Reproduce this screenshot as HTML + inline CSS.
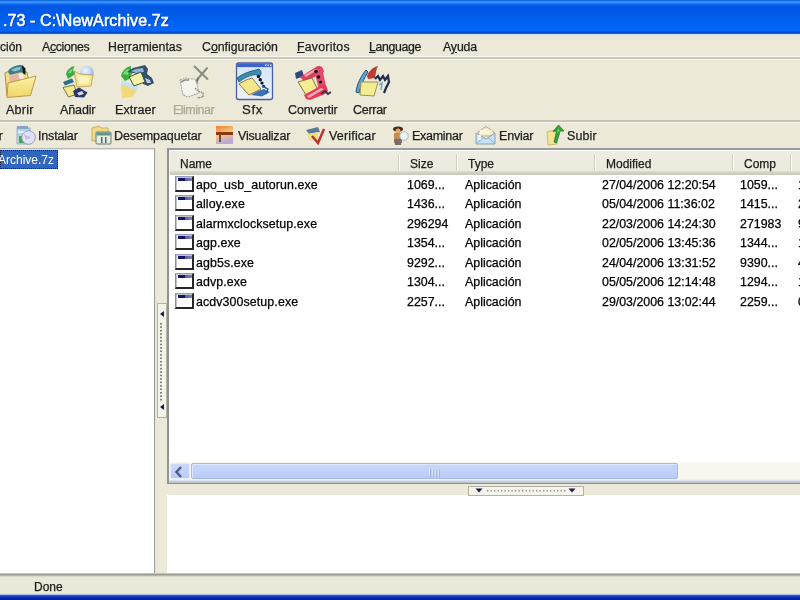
<!DOCTYPE html>
<html><head><meta charset="utf-8">
<style>
*{margin:0;padding:0;box-sizing:border-box}
html,body{width:800px;height:600px;overflow:hidden;background:#ECE9D8;font-family:"Liberation Sans",sans-serif;font-size:12px;color:#000}
.a{position:absolute}
.t{position:absolute;white-space:pre;line-height:14px;font-size:12px;will-change:transform;-webkit-text-stroke:0.25px currentColor;color:#1C1C1C}
#title{left:0;top:0;width:800px;height:34px;background:linear-gradient(to bottom,#0A56CE 0px,#2E8EFF 1.5px,#3090FF 2.8px,#0C62EA 4.5px,#0058E2 6px,#005CEA 16px,#0064F6 26px,#0066FA 30.5px,#0850CC 32px,#0846BE 33px,#4A70C8 34px)}
#title .tt{-webkit-text-stroke:0.55px #fff;left:3px;top:12px;font-size:16px;font-weight:normal;color:#fff;letter-spacing:0.1px;line-height:18px;text-shadow:1px 1px 0 #0A3AB0}
#menubar{left:0;top:34px;width:800px;height:23px;background:linear-gradient(to bottom,#C4D4F0 0,#DCE8FC 1px,#E4E8F0 2px,#E6E5D8 2.5px,#ECE9D8 4px)}
.sep1{left:0;top:57px;width:800px;height:2px;background:#CBC9BC}
.sep1w{left:0;top:56px;width:800px;height:1px;background:#F8F6EE;box-shadow:0 3px 0 #F4F2E8}
.sep2{left:0;top:120px;width:800px;height:2px;background:#C6C4B6}
.sep2w{left:0;top:122px;width:800px;height:1px;background:#F6F4EA}
.u{text-decoration:underline}
#tree{left:0;top:148px;width:155px;height:425px;background:#fff;border-top:1px solid #B4B8B8;border-right:1px solid #98A098;box-shadow:1px 0 0 #DDE4D6,inset 0 1px 0 #E0E4E4}
#sel{left:0;top:150px;width:58px;height:19px;background:#3166C0;outline:1px dotted #15224A;outline-offset:-1px}
#list{left:167px;top:148px;width:640px;height:336px;background:#fff;border-top:2px solid #9A9E9A;border-left:2px solid #8E9494;border-bottom:1px solid #8A90A0;box-shadow:inset 0 -2px 0 #E6EAF2}
#hdr{left:169px;top:150px;width:631px;height:25px;border-left:1px solid #F4F4EC;background:linear-gradient(to bottom,#FFFFFF 0,#FFFFFF 1px,#EEEDE2 1px,#EBEADD 21px,#E2E0D2 21px,#D8D6C8 22px,#CFCDBF 23.5px,#CCCABC 25px)}
.hs{position:absolute;top:154px;width:1px;height:16px;background:#D0CEBE;box-shadow:1px 0 0 #fff}
#vsplit{left:157px;top:303px;width:9px;height:114px;border:1px solid #B4B2A2;background:#F2F1E6}
#hscroll{left:169px;top:462px;width:631px;height:21px;background:linear-gradient(to bottom,#F7F7EF 0,#F7F7EF 17px,#EEF2F8 17px,#EEF2F8 18px,#C8D0DC 19px,#B8C0CC 21px)}
#hsl{left:170px;top:463px;width:20px;height:16px;background:linear-gradient(to bottom,#CDD9F8,#B8CAF4);border:1px solid #E4EBFA;border-radius:2px}
#hthumb{left:191px;top:463px;width:487px;height:16px;background:linear-gradient(to bottom,#C8D6FA 0,#C2D2FA 50%,#B8CAF4 100%);border:1px solid #A6B8E4;border-radius:2px;box-shadow:inset 1px 1px 0 #DCE6FC}
#hsplit{left:468px;top:486px;width:115px;height:9px;border:1px solid #B4B2A2;background:#F2F1E6}
#bottom{left:167px;top:495px;width:633px;height:78px;background:#fff}
#status{left:0;top:573px;width:800px;height:21px;background:linear-gradient(to bottom,#D8D8CC 0,#9C9D90 1.5px,#A8A89A 2.2px,#CDCDBE 3px,#E4E3D4 4px,#EAE8D8 5px)}
#taskbar{left:0;top:593px;width:800px;height:7px;background:linear-gradient(to bottom,#DCE6F0 0,#D0E2FC 1.2px,#5A82D0 2px,#1638B8 3px,#0C2CB0 5px,#001A9C 7px)}
.r{font-size:12.4px;color:#000}
.ico{position:absolute;left:175px;width:19px;height:16px;background:#FDFDFD;border-left:1px solid #8C8CA6;border-top:1px solid #9C9CC0;border-right:2px solid #262626;border-bottom:2px solid #262626;box-shadow:inset 1px 1px 0 #C4C4CC}
.ico::before{content:"";position:absolute;left:2px;top:1px;width:14px;height:3px;background:linear-gradient(to right,#14146E 0,#14146E 7px,#5A5AA0 7px,#8080B8 14px)}
</style></head><body>
<div id="title" class="a"><span class="t tt">.73 - C:\NewArchive.7z</span></div>
<div id="menubar" class="a"></div>
<span class="t" style="left:0;top:40px">ción</span>
<div class="a sep1"></div><div class="a sep1w"></div>
<div class="a sep2"></div><div class="a sep2w"></div>

<!-- ICONS -->
<svg class="a" style="left:0;top:0" width="800" height="150" viewBox="0 0 800 150">
<defs>
<filter id="bl" x="-10%" y="-10%" width="120%" height="120%"><feGaussianBlur stdDeviation="0.45"/></filter>
<linearGradient id="yel" x1="0" y1="0" x2="0" y2="1"><stop offset="0" stop-color="#FBF2A8"/><stop offset="1" stop-color="#EFD464"/></linearGradient>
<linearGradient id="vis" x1="0" y1="0" x2="0.3" y2="1"><stop offset="0" stop-color="#F07A30"/><stop offset="0.5" stop-color="#F8C880"/><stop offset="1" stop-color="#B8A8D8"/></linearGradient>
</defs>
<g filter="url(#bl)">
<!-- Abrir -->
<polygon points="5,73 9,71 13,72 27,72 28,78 9,83 7,96" fill="#F2DE84" stroke="#A89040" stroke-width="1"/>
<polygon points="9,76 20,72.5 23,80 10,82.5" fill="#E8B4A0"/>
<polygon points="18,74 22,73 24,79 20,80" fill="#F6E8E0"/>
<path d="M8,72 C9,68 14,66 19,65 L23,65.3 L25,69 L25,74.5 L21,72 L10,75 Z" fill="#3E7C8E"/>
<path d="M11,70 L16,67.5 L21,67 L19.5,70 L14,71.5 Z" fill="#86C4CE"/>
<path d="M22,65.5 L25.5,68.5 L25.5,75 L23,73 Z" fill="#0E161C"/>
<circle cx="27" cy="80" r="2" fill="none" stroke="#C8B880" stroke-width="0.7"/>
<polygon points="8,83 36,76 30.5,95.5 7,97.5" fill="url(#yel)" stroke="#B49C44" stroke-width="1"/>
<!-- Anadir -->
<radialGradient id="sph" cx="0.4" cy="0.35" r="0.7"><stop offset="0" stop-color="#F4F8FF"/><stop offset="0.6" stop-color="#B8D0EE"/><stop offset="1" stop-color="#90A8D0"/></radialGradient>
<circle cx="87" cy="72.5" r="6.8" fill="url(#sph)"/>
<path d="M74,71 L80,74 L93,75 L91,86 L77,87 Z" fill="#F6E68C" stroke="#B0A058" stroke-width="0.8"/>
<path d="M77,75 L90,77 L88,84 L79,84 Z" fill="#FAF2B8"/>
<path d="M66,74 C67,70 70,67 74.5,66 L73,70 L75,74 L71,77 L68,79 Z" fill="#38AC40"/>
<path d="M68,73 C69,71 71,69 73,68.5 L71,73 Z" fill="#80D888"/>
<polygon points="63,82 72,78.5 74,82 65,85.5" fill="#2E6E88"/>
<polygon points="63,87.5 74,85 77,94 68.5,97" fill="#F2E890" stroke="#7A7448" stroke-width="1"/>
<polygon points="73,91 79,87.5 87.5,92.5 84,97.5 75,97" fill="#2C3466"/>
<polygon points="77,93 82,91 84,94 79,95.5" fill="#D0D8F0"/>
<!-- Extraer -->
<path d="M121,76 C122,71 126,67 131,66 L131,70 L133,72 L129,79 L125,81 Z" fill="#3DAE3D"/>
<path d="M123,74 C124,71 127,69 129,69 L128,75 Z" fill="#7CD87C"/>
<polygon points="121,83 137,90 132,97 122,98" fill="#F2D878"/>
<polygon points="122,80 138,87 137,91 121,84" fill="#C4E4EE"/>
<path d="M127,72 L133,68 L145,65 L148,69 L147,74 L152,78 L154,83 L148,86 L143,84 L141,76 L134,73 Z" fill="#34506E"/>
<path d="M131,71 L136,69 L143,68 L144,72 L136,73 Z" fill="#8AB4D8"/>
<path d="M145,78 L150,80 L151,83 L147,83 Z" fill="#B8D0E8"/>
<polygon points="129,77 141,72 145,82 134,86" fill="#F4F0A4" stroke="#505040" stroke-width="1"/>
<!-- Eliminar -->
<line x1="194" y1="66" x2="208" y2="79.5" stroke="#8C8C84" stroke-width="2"/>
<line x1="207.5" y1="67.5" x2="196" y2="81" stroke="#8C8C84" stroke-width="2"/>
<line x1="198" y1="78" x2="195.5" y2="88" stroke="#6E6E6A" stroke-width="1.6"/>
<path d="M180,80 L186,78 L190,79 L195,79 L197,84 L199,93 L188,97 L183,95 Z" fill="#F4F4EE" stroke="#A8A8A0" stroke-width="1.1" stroke-dasharray="2 0.8"/>
<polyline points="181,82 185,80 189,80" fill="none" stroke="#8E8E88" stroke-width="1.5"/>
<polyline points="195,88 198,91 203,93 203,97 197,98" fill="none" stroke="#8A8A84" stroke-width="1.4" stroke-dasharray="1.6 0.8"/>
<!-- Sfx -->
<linearGradient id="sfxg" x1="0" y1="0" x2="0" y2="1"><stop offset="0" stop-color="#D4E4F8"/><stop offset="1" stop-color="#ECF2FB"/></linearGradient>
<rect x="236.5" y="63" width="36" height="36.5" rx="2" fill="url(#sfxg)" stroke="#4C5E9C" stroke-width="1.3"/>
<rect x="237.2" y="63.7" width="34.6" height="3.4" fill="#3E62C8"/>
<rect x="265" y="64.5" width="1.3" height="1.6" fill="#E8F0FF"/><rect x="267.5" y="64.5" width="1.3" height="1.6" fill="#E8F0FF"/><rect x="270" y="64.5" width="1.3" height="1.6" fill="#E8F0FF"/>
<path d="M237,78 C242,74 250,71 256,70 L259,69 C261,70 262,74 260,76 L255,74.5 C249,75.5 243,78.5 239,82 Z" fill="#3C8CAE" stroke="#1E5070" stroke-width="0.8"/>
<polygon points="239,84 246,80 252,78 261,89 249,95" fill="#F6E68A" stroke="#8A7A48" stroke-width="1"/>
<circle cx="258.5" cy="76.5" r="1.7" fill="#0E1626"/><circle cx="260.3" cy="79.8" r="1.7" fill="#0E1626"/><circle cx="262" cy="83" r="1.6" fill="#0E1626"/><circle cx="263.6" cy="86.2" r="1.5" fill="#0E1626"/>
<polygon points="251,95 258,91 264,89 270,92 262,96.5" fill="#3A72B4"/>
<polyline points="262,86 268,89 266,94" fill="none" stroke="#2E5E9E" stroke-width="1.4"/>
<!-- Convertir -->
<polygon points="295,73 302,70 304,76 296,79" fill="#2E4A80"/>
<path d="M300,77 L316,67 C319,65 322,66 323,69 L324,72 L318,75 L305,82 Z" fill="#E03A5C"/>
<path d="M304,75 L315,69 L319,69 L306,77 Z" fill="#F4A0B4"/>
<polygon points="314,70 322,68 326,86 319,90" fill="#E44A6A"/>
<polygon points="298,82 312,78 318,90 306,95" fill="#F8EC90" stroke="#807040" stroke-width="1"/>
<path d="M304,95 L322,85 L326,85 L328,91 L325,94 L310,100 L306,99 Z" fill="#E8385A"/>
<path d="M307,96 L321,88 L324,89 L309,98 Z" fill="#F6A8B8"/>
<circle cx="316" cy="71.5" r="1.8" fill="#181818"/><circle cx="318.5" cy="77" r="1.7" fill="#181818"/><circle cx="320.5" cy="82" r="1.6" fill="#181818"/>
<polyline points="321,94 325,91 328,94 331,92" fill="none" stroke="#303848" stroke-width="1.8"/>
<!-- Cerrar -->
<path d="M356,92 C357,84 361,76 366,70 L368,72 C364,78 361,85 359,93 Z" fill="#5AA8D8" stroke="#24507A" stroke-width="1"/>
<path d="M367,76 C369,71 373,67 378,66 C376,69 376,73 375,78 L368,79 Z" fill="#C03A30"/>
<polygon points="361,82 378,82 374,96 360,95" fill="#F4EC90" stroke="#9A9058" stroke-width="1"/>
<polyline points="375,79 378,76 380,80 383,76 385,80 388,76 389,82 386,88 384,93" fill="none" stroke="#1E2E48" stroke-width="2.2"/>
<polyline points="379,85 382,83 381,90" fill="none" stroke="#5AA8C8" stroke-width="1.4"/>
<!-- Instalar -->
<rect x="17" y="128" width="13" height="16" fill="#B4D4EC" stroke="#8AA8C8" stroke-width="0.8"/>
<rect x="17" y="126" width="11" height="3" fill="#8AA4C8"/>
<rect x="18" y="131" width="10" height="2" fill="#E0F0FA"/>
<rect x="19" y="136" width="5" height="7" fill="#48A848"/>
<circle cx="28.5" cy="137.5" r="6.8" fill="#E2E0F4" stroke="#8E9AB8" stroke-width="0.9"/>
<circle cx="28.5" cy="137.5" r="1.6" fill="#B8C4DC"/>
<path d="M24,134 L28,137 L26,140 Z" fill="#C8B8E8"/>
<!-- Desempaquetar -->
<polygon points="92,128 99,126 101,128 108,128 109,140 92,141" fill="#F2DA84" stroke="#C8B060" stroke-width="1"/>
<rect x="96" y="132" width="15" height="12" rx="1" fill="#E4ECE0" stroke="#6E7670" stroke-width="1"/>
<rect x="96.5" y="132.5" width="14" height="3" fill="#5C9A84"/>
<rect x="101" y="137" width="1.5" height="6" fill="#5A6A70"/><rect x="105" y="137" width="1.5" height="6" fill="#5A6A70"/>
<!-- Visualizar -->
<rect x="216" y="126" width="17" height="18" fill="url(#vis)"/>
<rect x="216" y="132" width="17" height="3" fill="#903818"/>
<rect x="219" y="135" width="2" height="7" fill="#705040"/>
<!-- Verificar -->
<polygon points="306,130 318,127 320,132 309,134" fill="#5A7A98"/>
<polygon points="307,134 318,132 318,140 309,140" fill="#F0E080"/>
<polyline points="312,136 318,143 324,129" fill="none" stroke="#B83030" stroke-width="2.5"/>
<!-- Examinar -->
<ellipse cx="398" cy="129" rx="5" ry="2.6" fill="#4A2A10"/>
<circle cx="398" cy="131" r="2.5" fill="#E0A868"/>
<polygon points="394,133 402,133 402,143 394,143" fill="#C88A48"/>
<polygon points="394,139 402,139 401,145 395,145" fill="#7A6A70"/>
<circle cx="404" cy="136" r="4.2" fill="#EAF6F6" stroke="#A8B8B8" stroke-width="1"/>
<!-- Enviar -->
<polygon points="478,132 486,126.5 494,132 494,136 478,136" fill="#F6ECC0" stroke="#A89C78" stroke-width="0.8"/>
<rect x="480" y="130" width="12" height="4" fill="#F8F4E0"/>
<path d="M476,133 L486,139 L495,133 L495,144 L476,144 Z" fill="#C6E2F6" stroke="#8C9AAC" stroke-width="0.9"/>
<polyline points="477,143 484,137.5" fill="none" stroke="#90A8C0" stroke-width="0.9"/>
<polyline points="494,143 488,137.5" fill="none" stroke="#90A8C0" stroke-width="0.9"/>
<rect x="478" y="135" width="3" height="5" fill="#E8F6FF"/>
<!-- Subir -->
<polygon points="547,132 555,130 557,144 548,145" fill="#F2E696" stroke="#C0B060" stroke-width="0.8"/>
<path d="M554,142 C555,138 556,134 557,131 L553,131.5 L558.5,125 L564,131 L560,131 C559,135 558,139 556.5,143 Z" fill="#34A834" stroke="#1E6A1E" stroke-width="0.7"/>
<path d="M557,133 L558,129 L559.5,131 Z" fill="#8AE08A"/>
</g>
</svg>
<!-- /ICONS -->
<!-- LABELS -->
<span id="L1" class="t" style="left:6.00px;top:103px;font-size:12.5px;letter-spacing:0.250px">Abrir</span>
<span id="L2" class="t" style="left:60.00px;top:103px;font-size:12.5px;letter-spacing:-0.120px">Añadir</span>
<span id="L3" class="t" style="left:115.00px;top:103px;font-size:12.5px;letter-spacing:0.067px">Extraer</span>
<span id="L4" class="t" style="left:173.00px;top:103px;font-size:12.5px;letter-spacing:-0.514px;color:#ACA899">Eliminar</span>
<span id="L5" class="t" style="left:242.40px;top:103px;font-size:13.2px;letter-spacing:0.600px">Sfx</span>
<span id="L6" class="t" style="left:287.50px;top:103px;font-size:12.5px;letter-spacing:-0.125px">Convertir</span>
<span id="L7" class="t" style="left:353.00px;top:103px;font-size:12.5px;letter-spacing:-0.280px">Cerrar</span>
<span id="M1" class="t" style="left:38.00px;top:129px;font-size:12.5px;letter-spacing:-0.171px">Instalar</span>
<span id="M2" class="t" style="left:114.00px;top:129px;font-size:12.5px;letter-spacing:-0.100px">Desempaquetar</span>
<span id="M3" class="t" style="left:238.00px;top:129px;font-size:12.5px;letter-spacing:-0.178px">Visualizar</span>
<span id="M4" class="t" style="left:329.00px;top:129px;font-size:12.5px;letter-spacing:0.175px">Verificar</span>
<span id="M5" class="t" style="left:411.50px;top:129px;font-size:12.5px;letter-spacing:-0.286px">Examinar</span>
<span id="M6" class="t" style="left:498.50px;top:129px;font-size:12.5px;letter-spacing:-0.200px">Enviar</span>
<span id="M7" class="t" style="left:567.25px;top:129px;font-size:12.5px;letter-spacing:0.125px">Subir</span>
<span id="N1" class="t" style="left:42.20px;top:40px;font-size:12.3px;letter-spacing:-0.329px">A<span class="u">c</span>ciones</span>
<span id="N2" class="t" style="left:108.00px;top:40px;font-size:12.3px;letter-spacing:0.000px">He<span class="u">r</span>ramientas</span>
<span id="N3" class="t" style="left:202.00px;top:40px;font-size:12.3px;letter-spacing:0.000px">C<span class="u">o</span>nfiguración</span>
<span id="N4" class="t" style="left:297.00px;top:40px;font-size:12.3px;letter-spacing:0.250px"><span class="u">F</span>avoritos</span>
<span id="N5" class="t" style="left:369.00px;top:40px;font-size:12.3px;letter-spacing:-0.357px"><span class="u">L</span>anguage</span>
<span id="N6" class="t" style="left:443.00px;top:40px;font-size:12.3px;letter-spacing:-0.125px">A<span class="u">y</span>uda</span>
<!-- /LABELS -->
<span class="t" style="left:-8px;top:129px">ar</span>

<div id="tree" class="a"></div>
<div id="sel" class="a"></div>
<span class="t" style="left:-2px;top:153px;color:#fff;-webkit-text-stroke:0">Archive.7z</span>

<div id="list" class="a"></div>
<div id="hdr" class="a"></div>
<div class="hs" style="left:398px"></div>
<div class="hs" style="left:456px"></div>
<div class="hs" style="left:594px"></div>
<div class="hs" style="left:732px"></div>
<div class="hs" style="left:790px"></div>
<span class="t" style="left:180px;top:157px">Name</span>
<span class="t" style="left:410px;top:157px">Size</span>
<span class="t" style="left:468px;top:157px">Type</span>
<span class="t" style="left:606px;top:157px">Modified</span>
<span class="t" style="left:744px;top:157px">Comp</span>

<div id="rows">
<div class="ico" style="top:176px"></div>
<span class="t r" style="letter-spacing:0.1px;left:195.5px;top:178px">apo_usb_autorun.exe</span>
<span class="t r" style="left:407px;top:178px">1069...</span>
<span class="t r" style="left:465px;top:178px">Aplicación</span>
<span class="t r" style="left:602px;top:178px">27/04/2006 12:20:54</span>
<span class="t r" style="left:740px;top:178px">1059...</span>
<span class="t r" style="left:798px;top:178px">1</span>
<div class="ico" style="top:195px"></div>
<span class="t r" style="letter-spacing:0.1px;left:195.5px;top:197px">alloy.exe</span>
<span class="t r" style="left:407px;top:197px">1436...</span>
<span class="t r" style="left:465px;top:197px">Aplicación</span>
<span class="t r" style="left:602px;top:197px">05/04/2006 11:36:02</span>
<span class="t r" style="left:740px;top:197px">1415...</span>
<span class="t r" style="left:798px;top:197px">2</span>
<div class="ico" style="top:215px"></div>
<span class="t r" style="letter-spacing:0.1px;left:195.5px;top:217px">alarmxclocksetup.exe</span>
<span class="t r" style="left:407px;top:217px">296294</span>
<span class="t r" style="left:465px;top:217px">Aplicación</span>
<span class="t r" style="left:602px;top:217px">22/03/2006 14:24:30</span>
<span class="t r" style="left:740px;top:217px">271983</span>
<span class="t r" style="left:798px;top:217px">9</span>
<div class="ico" style="top:234px"></div>
<span class="t r" style="letter-spacing:0.1px;left:195.5px;top:236px">agp.exe</span>
<span class="t r" style="left:407px;top:236px">1354...</span>
<span class="t r" style="left:465px;top:236px">Aplicación</span>
<span class="t r" style="left:602px;top:236px">02/05/2006 13:45:36</span>
<span class="t r" style="left:740px;top:236px">1344...</span>
<span class="t r" style="left:798px;top:236px">1</span>
<div class="ico" style="top:254px"></div>
<span class="t r" style="letter-spacing:0.1px;left:195.5px;top:256px">agb5s.exe</span>
<span class="t r" style="left:407px;top:256px">9292...</span>
<span class="t r" style="left:465px;top:256px">Aplicación</span>
<span class="t r" style="left:602px;top:256px">24/04/2006 13:31:52</span>
<span class="t r" style="left:740px;top:256px">9390...</span>
<span class="t r" style="left:798px;top:256px">4</span>
<div class="ico" style="top:273px"></div>
<span class="t r" style="letter-spacing:0.1px;left:195.5px;top:275px">advp.exe</span>
<span class="t r" style="left:407px;top:275px">1304...</span>
<span class="t r" style="left:465px;top:275px">Aplicación</span>
<span class="t r" style="left:602px;top:275px">05/05/2006 12:14:48</span>
<span class="t r" style="left:740px;top:275px">1294...</span>
<span class="t r" style="left:798px;top:275px">1</span>
<div class="ico" style="top:293px"></div>
<span class="t r" style="letter-spacing:0.1px;left:195.5px;top:295px">acdv300setup.exe</span>
<span class="t r" style="left:407px;top:295px">2257...</span>
<span class="t r" style="left:465px;top:295px">Aplicación</span>
<span class="t r" style="left:602px;top:295px">29/03/2006 13:02:44</span>
<span class="t r" style="left:740px;top:295px">2259...</span>
<span class="t r" style="left:798px;top:295px">0</span>
</div>

<svg class="a" style="left:157px;top:303px" width="10" height="115" viewBox="0 0 10 115">
<rect x="0.5" y="0.5" width="9" height="114" fill="#F4F3EA" stroke="#B4B2A2"/>
<polygon points="3,11 7,8 7,14" fill="#1A1A50"/><rect x="3" y="20.00" width="2" height="1.5" fill="#7A7A78"/><rect x="3" y="23.45" width="2" height="1.5" fill="#7A7A78"/><rect x="3" y="26.90" width="2" height="1.5" fill="#7A7A78"/><rect x="3" y="30.35" width="2" height="1.5" fill="#7A7A78"/><rect x="3" y="33.80" width="2" height="1.5" fill="#7A7A78"/><rect x="3" y="37.25" width="2" height="1.5" fill="#7A7A78"/><rect x="3" y="40.70" width="2" height="1.5" fill="#7A7A78"/><rect x="3" y="44.15" width="2" height="1.5" fill="#7A7A78"/><rect x="3" y="47.60" width="2" height="1.5" fill="#7A7A78"/><rect x="3" y="51.05" width="2" height="1.5" fill="#7A7A78"/><rect x="3" y="54.50" width="2" height="1.5" fill="#7A7A78"/><rect x="3" y="57.95" width="2" height="1.5" fill="#7A7A78"/><rect x="3" y="61.40" width="2" height="1.5" fill="#7A7A78"/><rect x="3" y="64.85" width="2" height="1.5" fill="#7A7A78"/><rect x="3" y="68.30" width="2" height="1.5" fill="#7A7A78"/><rect x="3" y="71.75" width="2" height="1.5" fill="#7A7A78"/><rect x="3" y="75.20" width="2" height="1.5" fill="#7A7A78"/><rect x="3" y="78.65" width="2" height="1.5" fill="#7A7A78"/><rect x="3" y="82.10" width="2" height="1.5" fill="#7A7A78"/><rect x="3" y="85.55" width="2" height="1.5" fill="#7A7A78"/><rect x="3" y="89.00" width="2" height="1.5" fill="#7A7A78"/><rect x="3" y="92.45" width="2" height="1.5" fill="#7A7A78"/><rect x="3" y="95.90" width="2" height="1.5" fill="#7A7A78"/>

<polygon points="3,104 7,101 7,107" fill="#1A1A50"/>
</svg>
<div id="hscroll" class="a"></div>
<div id="hsl" class="a"></div>
<div id="hthumb" class="a"></div>
<svg class="a" style="left:170px;top:462px" width="20" height="20" viewBox="0 0 20 20"><polyline points="11,5 6.5,10 11,15" fill="none" stroke="#4D5A8E" stroke-width="2.4"/></svg>
<svg class="a" style="left:428px;top:467px;opacity:0.55" width="12" height="10" viewBox="0 0 12 10"><g fill="#EEF3FF"><rect x="1" y="1" width="1" height="8"/><rect x="4" y="1" width="1" height="8"/><rect x="7" y="1" width="1" height="8"/><rect x="10" y="1" width="1" height="8"/></g><g fill="#8CA0D8"><rect x="2" y="2" width="1" height="8"/><rect x="5" y="2" width="1" height="8"/><rect x="8" y="2" width="1" height="8"/><rect x="11" y="2" width="1" height="8"/></g></svg>

<div id="bottom" class="a"></div>
<svg class="a" style="left:468px;top:486px" width="116" height="10" viewBox="0 0 116 10">
<rect x="0.5" y="0.5" width="115" height="9" fill="#F4F3EA" stroke="#B4B2A2"/>
<polygon points="7.5,2.5 14.5,2.5 11,6.5" fill="#1A1A50"/>
<rect x="19.0" y="4" width="1.3" height="1.5" fill="#8A8A88"/><rect x="22.5" y="4" width="1.3" height="1.5" fill="#8A8A88"/><rect x="26.0" y="4" width="1.3" height="1.5" fill="#8A8A88"/><rect x="29.5" y="4" width="1.3" height="1.5" fill="#8A8A88"/><rect x="33.0" y="4" width="1.3" height="1.5" fill="#8A8A88"/><rect x="36.5" y="4" width="1.3" height="1.5" fill="#8A8A88"/><rect x="40.0" y="4" width="1.3" height="1.5" fill="#8A8A88"/><rect x="43.5" y="4" width="1.3" height="1.5" fill="#8A8A88"/><rect x="47.0" y="4" width="1.3" height="1.5" fill="#8A8A88"/><rect x="50.5" y="4" width="1.3" height="1.5" fill="#8A8A88"/><rect x="54.0" y="4" width="1.3" height="1.5" fill="#8A8A88"/><rect x="57.5" y="4" width="1.3" height="1.5" fill="#8A8A88"/><rect x="61.0" y="4" width="1.3" height="1.5" fill="#8A8A88"/><rect x="64.5" y="4" width="1.3" height="1.5" fill="#8A8A88"/><rect x="68.0" y="4" width="1.3" height="1.5" fill="#8A8A88"/><rect x="71.5" y="4" width="1.3" height="1.5" fill="#8A8A88"/><rect x="75.0" y="4" width="1.3" height="1.5" fill="#8A8A88"/><rect x="78.5" y="4" width="1.3" height="1.5" fill="#8A8A88"/><rect x="82.0" y="4" width="1.3" height="1.5" fill="#8A8A88"/><rect x="85.5" y="4" width="1.3" height="1.5" fill="#8A8A88"/><rect x="89.0" y="4" width="1.3" height="1.5" fill="#8A8A88"/><rect x="92.5" y="4" width="1.3" height="1.5" fill="#8A8A88"/><rect x="96.0" y="4" width="1.3" height="1.5" fill="#8A8A88"/>
<polygon points="100.5,2.5 107.5,2.5 104,6.5" fill="#1A1A50"/>
</svg>
<div id="status" class="a"></div>
<span class="t" style="left:34px;top:580px">Done</span>
<div id="taskbar" class="a"></div>
</body></html>
